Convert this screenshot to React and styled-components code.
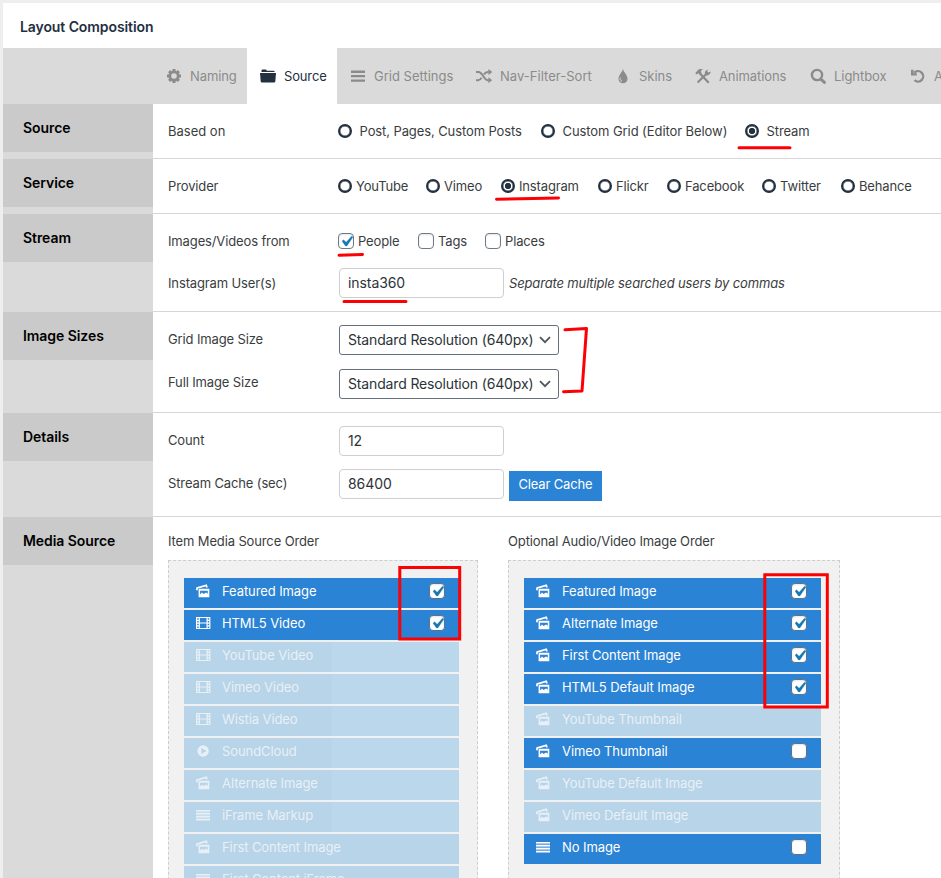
import React from "react";
import styled, { createGlobalStyle, css } from "styled-components";

const Global = createGlobalStyle`
  *, *::before, *::after { box-sizing: border-box; }
  html, body { margin: 0; padding: 0; overflow: hidden; }
  body {
    background: #eeeeee;
    font-family: Inter, "Liberation Sans", sans-serif;
    font-size: 13px;
    line-height: 20px;
    color: #3a3d40;
  }
`;

const Page = styled.div`
  position: relative;
  height: 878px;
  padding: 3px 0 0 3px;
  display: flex;
  flex-direction: column;
  overflow: hidden;
  white-space: nowrap;
`;

const Header = styled.header`
  flex: none;
  height: 45px;
  padding-left: 17px;
  display: flex;
  align-items: center;
  padding-top: 3px;
  background: #fff;
  color: #23303f;
  font-size: 14px;
  font-weight: 600;
  letter-spacing: -0.09px;
`;

const TabBar = styled.nav`
  flex: none;
  height: 56px;
  padding-left: 150px;
  display: flex;
  background: #dadada;
`;

const Tab = styled.div`
  flex: none;
  width: ${(p) => p.$w}px;
  padding: 0 0 0 13px;
  display: flex;
  align-items: center;
  gap: 8px;
  letter-spacing: ${(p) => p.$ls || 0}px;
  color: ${(p) => (p.$active ? "#23303f" : "#8b8b8b")};
  background: ${(p) => (p.$active ? "#fff" : "transparent")};
  svg { flex: none; }
`;

const Section = styled.section`
  flex: none;
  height: ${(p) => p.$h}px;
  display: flex;
`;

const Side = styled.div`
  width: 150px;
  flex: none;
  background: #dadada;
`;

const SideTitle = styled.h2`
  margin: 0;
  height: 48px;
  padding-left: 20px;
  line-height: 48px;
  background: #cacaca;
  color: #000;
  font-size: 14px;
  font-weight: 600;
  letter-spacing: -0.06px;
`;

const Body = styled.div`
  flex: 1;
  padding: ${(p) => p.$top}px 0 0 15px;
  display: flex;
  flex-direction: column;
  background: #fff;
  border-bottom: 1px solid #d6d6d6;
`;

const Field = styled.div`
  height: ${(p) => p.$h}px;
  flex: none;
  display: flex;
  align-items: flex-start;
`;

const Label = styled.label`
  width: 170px;
  flex: none;
  padding-top: ${(p) => p.$pt || 0}px;
  letter-spacing: ${(p) => p.$ls ?? -0.13}px;
`;

const Option = styled.label`
  flex: none;
  width: ${(p) => p.$w}px;
  height: 20px;
  display: flex;
  align-items: center;
  gap: ${(p) => p.$gap}px;
  letter-spacing: ${(p) => p.$ls ?? -0.15}px;
`;

const Radio = styled.i`
  flex: none;
  width: 14px;
  height: 14px;
  margin-bottom: 1px;
  border: 2px solid #23303f;
  border-radius: 50%;
  box-shadow: inset 0 0 0 0.4px #23303f;
  ${(p) =>
    p.$on &&
    css`
      background: radial-gradient(circle at center, #23303f 0 2.8px, #fff 3.5px);
    `}
`;

const Box = styled.i`
  flex: none;
  width: 16px;
  height: 16px;
  display: flex;
  align-items: center;
  justify-content: center;
  background: #fff;
  border: 1px solid ${(p) => p.$border || "#6f7a86"};
  border-radius: 4px;
  box-shadow: inset 0 1px 2px rgba(0, 0, 0, 0.1);
  svg { flex: none; display: block; }
`;

const Input = styled.div`
  flex: none;
  width: 165px;
  height: 30px;
  margin: 0 5px 0 1px;
  padding-left: 8px;
  line-height: 28px;
  font-size: 14px;
  letter-spacing: -0.08px;
  color: #2c3338;
  background: #fff;
  border: 1px solid #cfcfcf;
  border-radius: 4px;
`;

const Select = styled.div`
  flex: none;
  width: 220px;
  height: 30px;
  margin-left: 1px;
  padding: 0 7px 0 8px;
  display: flex;
  align-items: center;
  justify-content: space-between;
  font-size: 14px;
  letter-spacing: -0.15px;
  color: #2c3338;
  border: 1px solid #65707c;
  border-radius: 3px;
`;

const Hint = styled.em`
  padding-top: 5px;
  letter-spacing: -0.15px;
`;

const Button = styled.div`
  width: 93px;
  height: 30px;
  margin-top: 2px;
  line-height: 27px;
  text-align: center;
  color: #fff;
  background: #2a83d5;
  letter-spacing: -0.15px;
`;

const Columns = styled.div`
  display: flex;
  gap: 30px;
`;

const Column = styled.div`
  width: ${(p) => p.$w}px;
  flex: none;
`;

const Sortable = styled.div`
  height: 345px;
  margin-top: 9px;
  padding: 17px 18px 0 15px;
  display: flex;
  flex-direction: column;
  gap: 2px;
  background: #f1f1f1;
  border: 1px dashed #cdcdcd;
`;

const Item = styled.div`
  flex: none;
  height: 30px;
  padding: 0 14px 4px 11px;
  display: flex;
  align-items: center;
  color: ${(p) => (p.$off ? "#e8f0f6" : "#fff")};
  background: ${(p) =>
    !p.$off
      ? "#2a83d5"
      : p.$shade
      ? "linear-gradient(90deg, #b7d4e9 148px, #bad7ec 148px)"
      : "#b7d4e9"};
  svg { flex: none; }
`;

const ItemName = styled.span`
  flex: 1;
  margin-left: 11px;
  letter-spacing: -0.09px;
`;

const Marks = styled.svg`
  position: absolute;
  left: 0;
  top: 0;
  pointer-events: none;
`;

const Icon = ({ children }) => (
  <svg width="16" height="16" viewBox="0 0 16 16" fill="currentColor">
    {children}
  </svg>
);

const Gear = () => (
  <Icon>
    <circle cx="8" cy="8" r="4.2" fill="none" stroke="currentColor" strokeWidth="2.8" />
    <g stroke="currentColor" strokeWidth="3">
      <path d="M8 1v2M8 13v2M1 8h2M13 8h2M3.1 3.1l1.3 1.3M11.6 11.6l1.3 1.3M3.1 12.9l1.3-1.3M11.6 4.4l1.3-1.3" />
    </g>
  </Icon>
);
const Folder = () => (
  <Icon>
    <path d="M1.5 3.4V2.6Q1.5 1.6 2.5 1.6H5.8L7 2.7H13.6Q14.6 2.7 14.6 3.6V3.9H1.5zM0 5H16L15.3 13.4Q15.2 14.4 14.2 14.4H1.8Q.8 14.4.7 13.4z" />
  </Icon>
);
const Bars = () => (
  <Icon>
    <path d="M1 2.6h14v2.3H1zM1 7h14v2.3H1zM1 11.4h14v2.3H1z" />
  </Icon>
);
const Shuffle = () => (
  <Icon>
    <path d="M0 4h2.6C6.6 4 8 12.2 11.8 12.2h1M0 12.2h2.2c1.5 0 2.5-1 3.4-2.4M8 6.4C9 5 10 4 11.8 4h1" fill="none" stroke="currentColor" strokeWidth="2" />
    <path d="M12.4 1l3.8 3-3.8 3zM12.4 9.2l3.8 3-3.8 3z" />
  </Icon>
);
const Drop = () => (
  <Icon>
    <path d="M8 .8C8.4 4 12.5 7 12.5 10.7a4.5 4.5 0 0 1-9 0C3.500 7 7.600 4 8 .8z" />
    <path d="M5.200 9.400c-.5 2 .2 3.300 1.800 3.800" stroke="#dadada" strokeWidth="1" fill="none" />
  </Icon>
);
const Tools = () => (
  <Icon>
    <path d="M5.2 5.700L13.700 14.800" stroke="currentColor" strokeWidth="2.2" />
    <path d="M2.600 14.600L11 6.300" stroke="currentColor" strokeWidth="2.1" />
    <path d="M.2 5.2L2.500 2.500C4 .9 6 .7 8.400 1.600 6.900 1.800 6 2.500 5.900 3.500L6.700 5 4.600 6.800 3.300 5.200 1.700 6.500zM9.800 5.600c-.2-2 .9-3.600 3.100-4.200l-.6 2 1.200 1.100 2.200-.9c-.1 2.500-2 4.200-4.400 3.800z" />
  </Icon>
);
const Search = () => (
  <Icon>
    <circle cx="7" cy="7" r="5.1" fill="none" stroke="currentColor" strokeWidth="2.4" />
    <path d="M10.600 10.900L14.400 14.400" stroke="currentColor" strokeWidth="2.9" strokeLinecap="round" />
  </Icon>
);
const Undo = () => (
  <Icon>
    <path d="M4.200 4.800A5.200 5.200 0 1 1 4.500 12.200" fill="none" stroke="currentColor" strokeWidth="2.3" />
    <path d="M1 1.700V7.400H6.800V5.200H3.600V1.700z" />
  </Icon>
);
const Images = () => (
  <Icon>
    <path d="M1.700 7.200L2.200 5 11.200 2.300l.8 2.200" fill="none" stroke="currentColor" strokeWidth="1.800" />
    <path fillRule="evenodd" d="M4.200 5.800H14.300V14.300H3.600V6.500zM5.100 7.800V11.400l1.900-1.800 1.600 1.500 2.500-1.600 1.700 1.300V7.800z" />
  </Icon>
);
const Film = () => (
  <Icon>
    <path fillRule="evenodd" d="M1 2H15.400V14H1zM4.900 3V7.400H11.500V3zM4.900 8.600V13H11.500V8.600zM2.200 3.200v1.600h1.500V3.200zM2.200 6v1.600h1.500V6zM2.200 8.700v1.600h1.500V8.700zM2.200 11.400V13h1.500V11.400zM12.700 3.200v1.600H14.200V3.200zM12.700 6v1.600H14.200V6zM12.700 8.700v1.600H14.200V8.700zM12.700 11.400V13h1.500V11.400z" />
  </Icon>
);
const Play = () => (
  <Icon>
    <path fillRule="evenodd" d="M8.100 2.300a5.700 5.700 0 1 0 0 11.400 5.700 5.700 0 0 0 0-11.400zM6.400 4.900L11.500 8l-5.100 3.100z" />
  </Icon>
);
const Lines = () => (
  <Icon>
    <path d="M1 3h14v1.400H1zM1 6h14v1.400H1zM1 9h14v1.400H1zM1 12h14v1.400H1z" />
    <path d="M1 4.400h14v1.600H1zM1 7.400h14v1.600H1zM1 10.400h14v1.600H1z" opacity=".35" />
  </Icon>
);
const Check = () => (
  <svg width="21" height="21" viewBox="0 0 20 20" fill="#1878b4" stroke="#1878b4" strokeWidth="0.300">
    <path d="M14.83 4.89l1.34.94-5.81 8.38H9.02L5.78 9.67l1.34-1.25 2.57 2.4z" />
  </svg>
);
const Chevron = () => (
  <svg width="12" height="8" viewBox="0 0 12 8">
    <path d="M1 1.200L6 6.200L11 1.200" fill="none" stroke="#50575e" strokeWidth="1.800" />
  </svg>
);

const tabs = [
  ["Naming", Gear, 94, -0.1],
  ["Source", Folder, 90, -0.15],
  ["Grid Settings", Bars, 126, 0],
  ["Nav-Filter-Sort", Shuffle, 139, 0.03],
  ["Skins", Drop, 80, 0],
  ["Animations", Tools, 115, -0.1],
  ["Lightbox", Search, 100, -0.05],
  ["Add-ons", Undo, 110, 0],
];

const bases = [
  ["Post, Pages, Custom Posts", 203, -0.1],
  ["Custom Grid (Editor Below)", 204, -0.08],
  ["Stream", 90, -0.1],
];

const providers = [
  ["YouTube", 88],
  ["Vimeo", 75],
  ["Instagram", 97],
  ["Flickr", 69],
  ["Facebook", 95],
  ["Twitter", 79],
  ["Behance", 80],
];

const mediaItems = [
  ["Featured Image", Images, "checked"],
  ["HTML5 Video", Film, "checked"],
  ["YouTube Video", Film, "off"],
  ["Vimeo Video", Film, "off"],
  ["Wistia Video", Film, "off"],
  ["SoundCloud", Play, "off"],
  ["Alternate Image", Images, "off"],
  ["iFrame Markup", Lines, "off"],
  ["First Content Image", Images, "off"],
  ["First Content iFrame", Lines, "off"],
];

const posterItems = [
  ["Featured Image", Images, "checked"],
  ["Alternate Image", Images, "checked"],
  ["First Content Image", Images, "checked"],
  ["HTML5 Default Image", Images, "checked"],
  ["YouTube Thumbnail", Images, "off"],
  ["Vimeo Thumbnail", Images, "empty"],
  ["YouTube Default Image", Images, "off"],
  ["Vimeo Default Image", Images, "off"],
  ["No Image", Lines, "empty"],
];

const Panel = ({ title, h, top, children }) => (
  <Section $h={h}>
    <Side>
      <SideTitle>{title}</SideTitle>
    </Side>
    <Body $top={top}>{children}</Body>
  </Section>
);

const SortList = ({ items, shadedRows = 0 }) => (
  <Sortable>
    {items.map(([name, Glyph, state], i) => (
      <Item key={name} $off={state === "off"} $shade={i < shadedRows}>
        <Glyph />
        <ItemName>{name}</ItemName>
        {state !== "off" && (
          <Box $border="#5d7286">{state === "checked" && <Check />}</Box>
        )}
      </Item>
    ))}
  </Sortable>
);

export default function App() {
  return (
    <Page>
      <Global />
      <Header>Layout Composition</Header>
      <TabBar>
        {tabs.map(([name, Glyph, w, ls]) => (
          <Tab key={name} $w={w} $ls={ls} $active={name === "Source"}>
            <Glyph />
            <span>{name}</span>
          </Tab>
        ))}
      </TabBar>

      <Panel title="Source" h={55} top={17}>
        <Field $h={20}>
          <Label $ls={0}>Based on</Label>
          {bases.map(([name, w, ls]) => (
            <Option key={name} $w={w} $gap={7.5} $ls={ls}>
              <Radio $on={name === "Stream"} />
              {name}
            </Option>
          ))}
        </Field>
      </Panel>

      <Panel title="Service" h={55} top={17}>
        <Field $h={20}>
          <Label>Provider</Label>
          {providers.map(([name, w]) => (
            <Option key={name} $w={w} $gap={4}>
              <Radio $on={name === "Instagram"} />
              {name}
            </Option>
          ))}
        </Field>
      </Panel>

      <Panel title="Stream" h={98} top={17}>
        <Field $h={37}>
          <Label>Images/Videos from</Label>
          <Option $w={80} $gap={4}><Box><Check /></Box>People</Option>
          <Option $w={67} $gap={4}><Box />Tags</Option>
          <Option $w={80} $gap={4}><Box />Places</Option>
        </Field>
        <Field $h={30}>
          <Label $pt={4.5}>Instagram User(s)</Label>
          <Input>insta360</Input>
          <Hint>Separate multiple searched users by commas</Hint>
        </Field>
      </Panel>

      <Panel title="Image Sizes" h={101} top={13}>
        <Field $h={44}>
          <Label $pt={4}>Grid Image Size</Label>
          <Select>Standard Resolution (640px)<Chevron /></Select>
        </Field>
        <Field $h={30}>
          <Label $pt={3}>Full Image Size</Label>
          <Select>Standard Resolution (640px)<Chevron /></Select>
        </Field>
      </Panel>

      <Panel title="Details" h={104} top={13}>
        <Field $h={43}>
          <Label $pt={4}>Count</Label>
          <Input>12</Input>
        </Field>
        <Field $h={32}>
          <Label $pt={4}>Stream Cache (sec)</Label>
          <Input>86400</Input>
          <Button>Clear Cache</Button>
        </Field>
      </Panel>

      <Panel title="Media Source" h={400} top={14}>
        <Columns>
          <Column $w={310}>
            <Label>Item Media Source Order</Label>
            <SortList items={mediaItems} shadedRows={8} />
          </Column>
          <Column $w={332}>
            <Label>Optional Audio/Video Image Order</Label>
            <SortList items={posterItems} />
          </Column>
        </Columns>
      </Panel>

      <Marks width="941" height="878" fill="none" stroke="#fd0004" strokeWidth="3" strokeLinecap="round" strokeLinejoin="round">
        <path d="M739 147.700H790M496.500 199.200L558.500 198M339 255.200L362.500 254.500M344 301.500H406" />
        <path d="M565 329.800L586.500 328.500L582 391L563.500 391.800" />
        <path d="M399.800 567.500H459.700V639H399.800zM764.800 574.800H827.300V707H764.800z" strokeLinejoin="miter" />
      </Marks>
    </Page>
  );
}
